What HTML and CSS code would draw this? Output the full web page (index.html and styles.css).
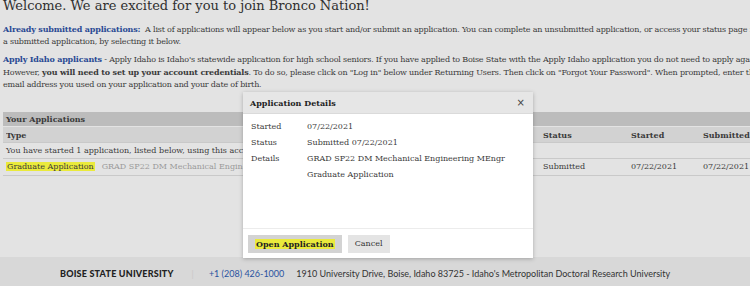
FILE: index.html
```html
<!DOCTYPE html>
<html lang="en">
<head>
<meta charset="utf-8">
<title>Bronco Nation Applications</title>
<link rel="stylesheet" href="styles.css">
</head>
<body>
<div class="page">
  <main class="content">
    <h1 class="title">Welcome. We are excited for you to join Bronco Nation!</h1>
    <p class="para"><strong class="lead">Already submitted applications:</strong>&nbsp; A list of applications will appear below as you start and/or submit an application. You can complete an unsubmitted application, or access your status page for<br>a submitted application, by selecting it below.</p>
    <p class="para"><strong class="lead">Apply Idaho applicants</strong> - Apply Idaho is Idaho's statewide application for high school seniors. If you have applied to Boise State with the Apply Idaho application you do not need to apply again.<br>However, <strong>you will need to set up your account credentials</strong>. To do so, please click on "Log in" below under Returning Users. Then click on "Forgot Your Password". When prompted, enter the<br>email address you used on your application and your date of birth.</p>

    <section class="apps">
      <div class="apps-title">Your Applications</div>
      <div class="row head">
        <span class="c-type">Type</span>
        <span class="c-status">Status</span>
        <span class="c-started">Started</span>
        <span class="c-sub">Submitted</span>
      </div>
      <div class="row note">You have started 1 application, listed below, using this account.</div>
      <div class="row item">
        <span class="c-type"><span class="mark">Graduate Application</span><span class="desc">GRAD SP22 DM Mechanical Engineering MEngr</span></span>
        <span class="c-status">Submitted</span>
        <span class="c-started">07/22/2021</span>
        <span class="c-sub">07/22/2021</span>
      </div>
    </section>
  </main>

  <footer class="footer">
    <span class="brand">BOISE STATE UNIVERSITY</span>
    <span class="sep">|</span>
    <span class="phone">+1 (208) 426-1000</span>
    <span class="addr">1910 University Drive, Boise, Idaho 83725 - Idaho's Metropolitan Doctoral Research University</span>
  </footer>

  <div class="dialog">
    <div class="dlg-head">
      <span class="dlg-title">Application Details</span>
      <span class="dlg-close">×</span>
    </div>
    <div class="dlg-body">
      <div class="dl"><span class="dt">Started</span><span class="dd">07/22/2021</span></div>
      <div class="dl"><span class="dt">Status</span><span class="dd">Submitted 07/22/2021</span></div>
      <div class="dl"><span class="dt">Details</span><span class="dd">GRAD SP22 DM Mechanical Engineering MEngr<br>Graduate Application</span></div>
    </div>
    <div class="dlg-foot">
      <button class="btn btn-primary"><span class="mark">Open Application</span></button>
      <button class="btn">Cancel</button>
    </div>
  </div>
</div>
</body>
</html>
```

FILE: styles.css
```css
* { box-sizing: border-box; }
html, body { margin: 0; padding: 0; }
body {
  width: 750px;
  height: 286px;
  overflow: hidden;
  background: #e3e3e3;
  font-family: "DejaVu Serif", "Liberation Serif", serif;
  color: #3a3a3a;
}
.page {
  position: relative;
  width: 750px;
  height: 286px;
  display: flex;
  flex-direction: column;
}
.content {
  flex: 1;
  padding: 0 0 0 3px;
  white-space: nowrap;
  overflow: hidden;
}
.title {
  margin: -4px 0 0 0;
  font-size: 13px;
  font-weight: normal;
  line-height: 20px;
  color: #2f2f2f;
}
.para {
  margin: 7px 0 0 0;
  font-size: 8px;
  letter-spacing: -0.18px;
  line-height: 12px;
}
.para + .para { margin-top: 5px; }
.lead { color: #2a4a94; }
.apps {
  margin-top: 21px;
  font-size: 8px;
  line-height: 14px;
}
.apps-title {
  background: #bcbcbc;
  font-weight: bold;
  padding-left: 3px;
  height: 14px;
}
.row {
  display: flex;
  padding-left: 3px;
  border-bottom: 1px solid #c9c9c9;
  height: 16px;
  align-items: center;
  overflow: hidden;
}
.head { background: #d2d2d2; font-weight: bold; margin-top: 1px; }
.row > span { flex-shrink: 0; }
.c-type { width: 537px; overflow: hidden; white-space: nowrap; }
.c-status { width: 88px; }
.c-started { width: 72px; }
.c-sub { width: 60px; }
.item { height: 17px; }
.mark {
  background: #eaea3c;
  padding: 0 1px;
}
.desc { color: #9a9a9a; margin-left: 7px; }

.footer {
  height: 29px;
  background: #d8d8d8;
  display: flex;
  align-items: center;
  padding: 4px 0 0 60px;
  font-family: Lato, "Liberation Sans", sans-serif;
  font-size: 9px;
  color: #333;
  white-space: nowrap;
}
.brand { font-weight: 900; letter-spacing: 0.2px; color: #222; }
.sep { color: #c8c8c8; margin: 0 15px 0 18px; }
.phone { color: #2a53a0; margin-right: 12px; }

.dialog {
  position: absolute;
  left: 243px;
  top: 92px;
  width: 290px;
  height: 166px;
  background: #fff;
  box-shadow: 0 1px 4px rgba(0,0,0,0.25);
  display: flex;
  flex-direction: column;
  font-size: 8px;
}
.dlg-head {
  height: 22px;
  background: #e6e6e6;
  display: flex;
  align-items: center;
  justify-content: space-between;
  padding: 0 8px 0 7px;
  border-bottom: 1px solid #dadada;
}
.dlg-title { font-weight: bold; color: #222; }
.dlg-close { font-family: "DejaVu Sans", sans-serif; font-size: 10px; color: #444; }
.dlg-body {
  flex: 1;
  padding: 5px 8px 0 8px;
  line-height: 16px;
}
.dl { display: flex; }
.dt { width: 56px; }
.dd { flex: 1; }
.dlg-foot {
  height: 30px;
  border-top: 1px solid #ececec;
  display: flex;
  align-items: center;
  gap: 6px;
  padding: 0 5px;
}
.btn {
  font-family: "DejaVu Serif", "Liberation Serif", serif;
  font-size: 8px;
  border: none;
  height: 18px;
  padding: 0 7px;
  background: #e4e4e4;
  color: #333;
}
.btn-primary { background: #d3d3d3; font-weight: bold; color: #222; }
```
